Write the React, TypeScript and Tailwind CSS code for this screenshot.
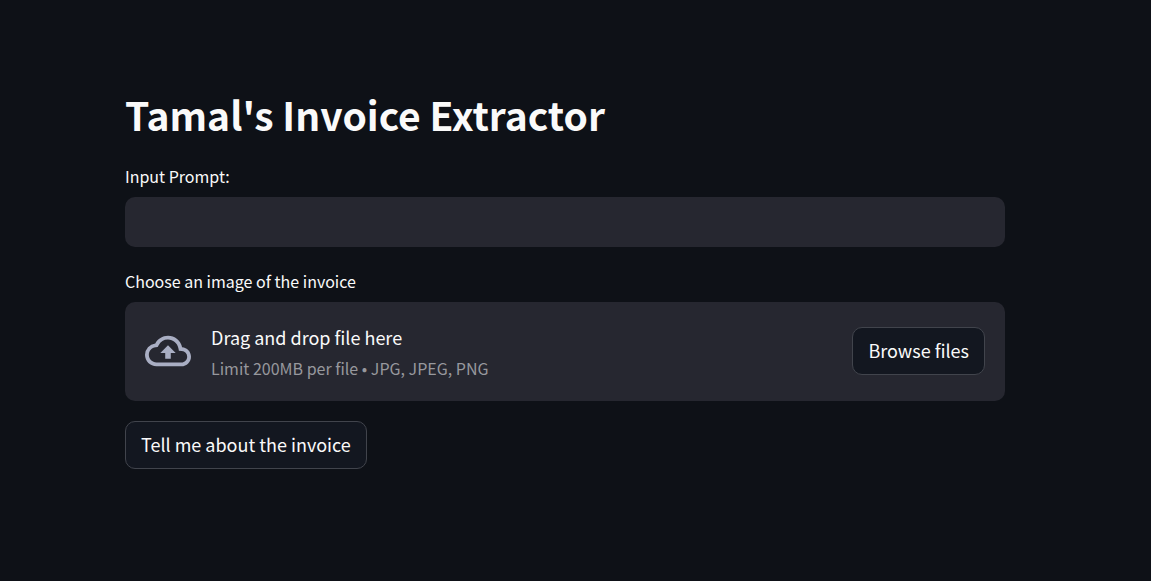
const fontStack = "font-['Noto_Sans_CJK_JP',sans-serif]";
const buttonStyle =
  "h-12 rounded-[10px] border border-[#41444c] bg-[#131720] px-[15px] pb-0.5 text-[18px] leading-6";

function CloudUploadIcon() {
  return (
    <svg viewBox="0 0 24 24" className="size-[46px] shrink-0 fill-[#a9aec3]" aria-hidden="true">
      <path d="M19.35 10.04A7.49 7.49 0 0 0 12 4C9.11 4 6.6 5.64 5.35 8.04A5.994 5.994 0 0 0 0 14c0 3.31 2.69 6 6 6h13c2.76 0 5-2.24 5-5 0-2.64-2.05-4.78-4.65-4.96zM19 18H6c-2.21 0-4-1.79-4-4 0-2.05 1.53-3.76 3.56-3.97l1.07-.11.5-.95A5.469 5.469 0 0 1 12 6c2.62 0 4.88 1.86 5.39 4.43l.3 1.5 1.53.11A2.98 2.98 0 0 1 22 15c0 1.65-1.35 3-3 3zM8 13h2.55v3h2.9v-3H16l-4-4-4 4z" />
    </svg>
  );
}

export default function App() {
  return (
    <div className={`min-h-screen bg-[#0e1117] pr-[21px] text-[#fafafa] ${fontStack}`}>
      <main className="mx-auto w-full max-w-[920px] px-5 pt-[88px] pb-20">
        <h1 className="text-[39px] leading-[52px] font-bold">Tamal's Invoice Extractor</h1>
        <form className="mt-6 flex flex-col items-start" onSubmit={(e) => e.preventDefault()}>
          <label htmlFor="prompt" className="text-[16px] leading-6">Input Prompt:</label>
          <input id="prompt" type="text" className="mt-[9px] h-[50px] w-full rounded-[10px] bg-[#262730] px-4 text-lg outline-none" />
          <label htmlFor="browse" className="mt-[22px] text-[16px] leading-6">Choose an image of the invoice</label>
          <section className="mt-[9px] flex w-full items-center rounded-[10px] bg-[#262730] px-5 pt-[18px] pb-[19px]">
            <CloudUploadIcon />
            <div className="mr-auto ml-5">
              <p className="text-[18px] leading-[34px]">Drag and drop file here</p>
              <p className="text-[16px] leading-7 text-[#97989d]">Limit 200MB per file • JPG, JPEG, PNG</p>
            </div>
            <button id="browse" type="button" className={buttonStyle}>Browse files</button>
          </section>
          <button type="submit" className={`mt-5 ${buttonStyle}`}>Tell me about the invoice</button>
        </form>
      </main>
    </div>
  );
}
